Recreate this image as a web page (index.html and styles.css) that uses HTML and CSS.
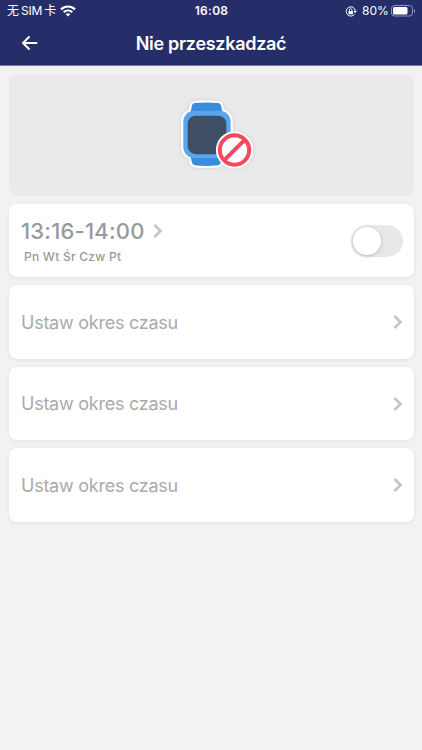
FILE: index.html
```html
<!DOCTYPE html>
<html lang="pl">
<head>
    <meta charset="UTF-8">
    <meta name="viewport" content="width=device-width, initial-scale=1.0">
    <title>Nie przeszkadzać</title>
    <link rel="stylesheet" href="styles.css">
</head>
<body>
    <header class="header">
        <div class="status-bar">
            <div class="status-left">
                <span class="carrier">无<span class="sim">SIM</span>卡</span>
                <svg class="wifi" width="16" height="12" viewBox="0 0 16 12" fill="none" stroke="#fff" stroke-width="2.2">
                    <path d="M1 4.400C5 .5 11 .5 15 4.400"/>
                    <path d="M3.700 7.200c2.500-2.300 6.100-2.300 8.600 0"/>
                    <path d="M8 11.500 5.700 9.200c1.300-1.200 3.300-1.200 4.600 0z" fill="#fff" stroke="none"/>
                </svg>
            </div>
            <div class="status-time">16:08</div>
            <div class="status-right">
                <svg class="lock" width="12" height="11" viewBox="0 0 12 11" fill="none" stroke="#fff">
                    <path d="M9.300 2.400A4.600 4.600 0 1 0 9.500 8.300M9.400 2.500a4.500 4.500 0 0 1 .7 3"/>
                    <path d="M8.400 5.100h3.400L10.100 7.200z" fill="#fff" stroke="none"/>
                    <rect x="3.500" y="5" width="4.400" height="3.200" rx=".5" fill="#fff" stroke="none"/>
                    <path d="M4.400 5V4a1.300 1.300 0 0 1 2.600 0v1" stroke-width=".8"/>
                </svg>
                <span class="percent">80%</span>
                <svg class="battery" width="25" height="12" viewBox="0 0 25 12">
                    <rect x=".5" y=".5" width="21" height="10.500" rx="3" fill="none" stroke="#9296b8"/>
                    <rect x="2" y="2" width="14.500" height="7.500" rx="1.500" fill="#fff"/>
                    <path d="M22.900 4v4c1.500-.7 1.500-3.300 0-4z" fill="#9296b8"/>
                </svg>
            </div>
        </div>
        <div class="nav-bar">
            <svg class="back" width="18" height="16" viewBox="0 0 18 16" fill="none" stroke="#fff" stroke-width="2" stroke-linecap="round" stroke-linejoin="round">
                <path d="M8 2 2 8l6 6M2.500 8H15.500"/>
            </svg>
            <h1 class="title">Nie przeszkadzać</h1>
        </div>
    </header>

    <main class="content">
        <div class="banner">
            <svg class="watch" width="90" height="90" viewBox="0 0 90 90">
                <g fill="#fff" stroke="#fff" stroke-width="4.400" stroke-linejoin="round">
                    <path d="M22 15q1-1.800 3-1.900 11.500-1.200 23 0 2 .1 2.900 1.900l1.600 8H20.500z"/>
                    <path d="M20.500 66h32l-1.600 7q-.9 2-2.900 2.300-11.500 1.200-23 0-2-.3-3-2.300z"/>
                    <rect x="13.300" y="20.700" width="47.300" height="47.300" rx="11"/>
                </g>
                <path d="M22 15q1-1.800 3-1.900 11.500-1.200 23 0 2 .1 2.900 1.900l1.600 8H20.500z" fill="#398ddc"/>
                <path d="M20.500 66h32l-1.600 7q-.9 2-2.900 2.300-11.500 1.200-23 0-2-.3-3-2.300z" fill="#398ddc"/>
                <rect x="13.300" y="20.700" width="47.300" height="47.300" rx="11" fill="#5aa5ef"/>
                <rect x="17.700" y="25.700" width="38.600" height="38.500" rx="8" fill="#3e4e65"/>
                <circle cx="64.500" cy="60" r="18.600" fill="#fff"/>
                <circle cx="64.500" cy="60" r="14.700" fill="#fff" stroke="#f7485e" stroke-width="4"/>
                <path d="M54.300 70.200 74.700 49.800" stroke="#f7485e" stroke-width="4"/>
            </svg>
        </div>

        <div class="card">
            <div class="period">
                <div class="period-time">
                    <span class="time">13:16-14:00</span>
                    <svg class="chevron" width="10" height="16" viewBox="0 0 10 16">
                        <path d="M1.500 2 7.500 8l-6 6"/>
                    </svg>
                </div>
                <div class="days">Pn Wt Śr Czw Pt</div>
            </div>
            <div class="switch"><span class="knob"></span></div>
        </div>

        <div class="card">
            <span class="label">Ustaw okres czasu</span>
            <svg class="chevron" width="10" height="16" viewBox="0 0 10 16">
                <path d="M1.500 2 7.500 8l-6 6"/>
            </svg>
        </div>

        <div class="card">
            <span class="label">Ustaw okres czasu</span>
            <svg class="chevron" width="10" height="16" viewBox="0 0 10 16">
                <path d="M1.500 2 7.500 8l-6 6"/>
            </svg>
        </div>

        <div class="card">
            <span class="label">Ustaw okres czasu</span>
            <svg class="chevron" width="10" height="16" viewBox="0 0 10 16">
                <path d="M1.500 2 7.500 8l-6 6"/>
            </svg>
        </div>
    </main>
</body>
</html>
```
FILE: styles.css
```css
* {
    box-sizing: border-box;
}
body {
    margin: 0;
    min-height: 100vh;
    background-color: #f2f2f2;
    font-family: Inter, "Noto Sans CJK SC", sans-serif;
}
svg {
    display: block;
    flex: none;
}
.header {
    height: 66px;
    background-color: #262e69;
    border-bottom: 1px solid #777b9f;
    color: #fff;
}
.status-bar {
    display: grid;
    grid-template-columns: 1fr auto 1fr;
    align-items: center;
    height: 22px;
    padding: 0 6px 0 7px;
    font-size: 12px;
    line-height: 22px;
}
.status-left,
.status-right {
    display: flex;
    align-items: center;
}
.carrier {
    display: flex;
    gap: 2px;
}
.sim {
    letter-spacing: -0.2px;
}
.wifi {
    margin-left: 4px;
}
.status-time {
    font-weight: 600;
    letter-spacing: 0.3px;
}
.status-right {
    justify-content: flex-end;
}
.percent {
    margin: 0 2px 0 5px;
    letter-spacing: 0.1px;
}
.nav-bar {
    display: grid;
    grid-template-columns: 60px 1fr 60px;
    align-items: center;
    height: 42px;
}
.back {
    margin-left: 21px;
}
.title {
    margin: 0;
    text-align: center;
    font-size: 18px;
    font-weight: 600;
    letter-spacing: -0.3px;
}
.content {
    display: flex;
    flex-direction: column;
    gap: 8px;
    padding: 8px 8.5px;
}
.banner {
    display: flex;
    justify-content: center;
    height: 121.5px;
    padding: 16px 0 0 8px;
    border-radius: 8px;
    background-color: #eaeaea;
}
.watch {
    filter: drop-shadow(0 0 2px rgba(0, 0, 0, 0.1));
}
.card {
    display: flex;
    align-items: center;
    justify-content: space-between;
    height: 73.5px;
    padding: 1px 11px 0 12.5px;
    border-radius: 8px;
    background-color: #fff;
    box-shadow: 0 1px 4px rgba(0, 0, 0, 0.07);
}
.period {
    padding-top: 1px;
}
.period-time {
    display: flex;
    align-items: center;
    gap: 8px;
}
.time {
    color: #999;
    font-size: 22px;
    font-weight: 500;
    line-height: 28px;
    letter-spacing: 0.2px;
}
.days {
    margin: 4px 0 0 3px;
    color: #999;
    font-size: 12px;
    font-weight: 500;
    line-height: 16px;
    letter-spacing: 0.25px;
}
.label {
    color: #aaa;
    font-size: 18px;
    letter-spacing: -0.25px;
}
.chevron {
    fill: none;
    stroke: #c4c4c4;
    stroke-width: 2.6;
}
.switch {
    width: 52px;
    height: 32px;
    padding: 2px;
    border-radius: 16px;
    background-color: #e8e8ea;
}
.knob {
    display: block;
    width: 28px;
    height: 28px;
    border-radius: 50%;
    background-color: #fff;
    box-shadow: 0 1px 4px rgba(0, 0, 0, 0.2);
}
```
